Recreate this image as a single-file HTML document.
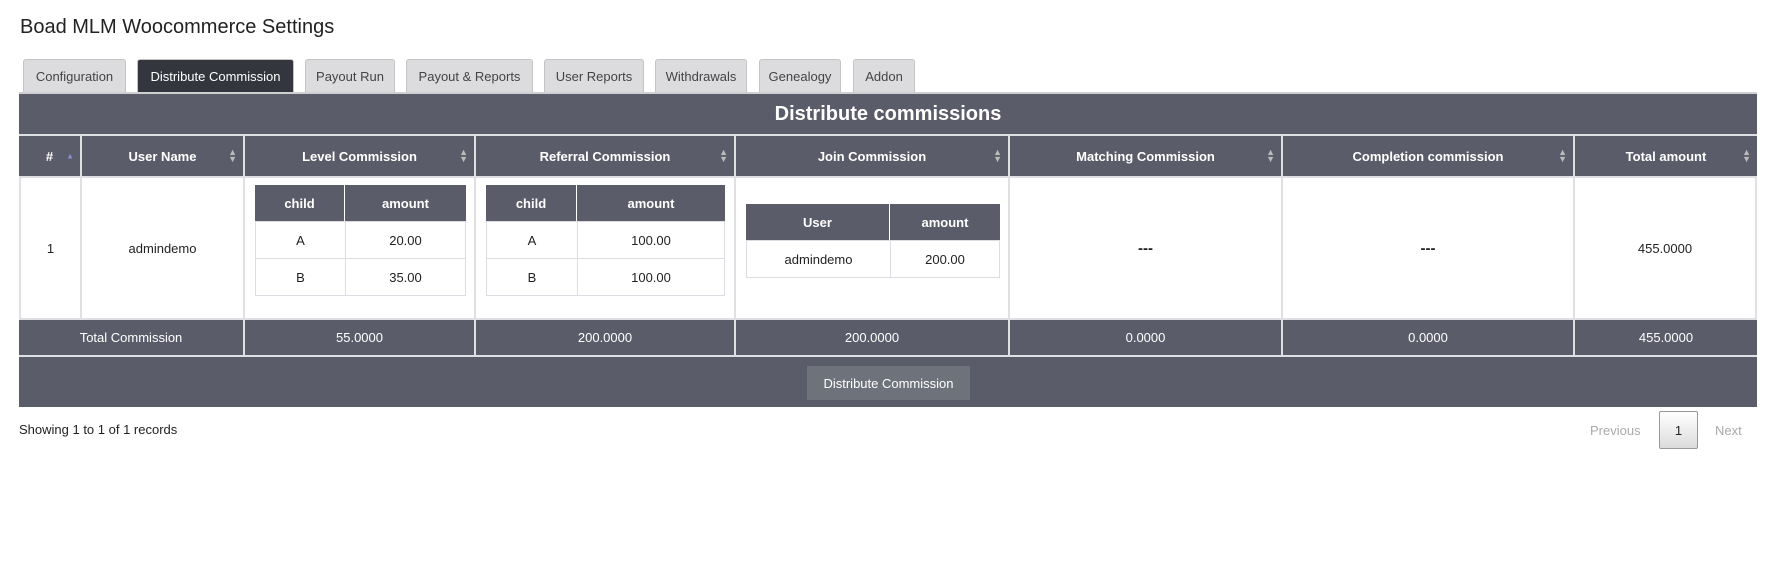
<!DOCTYPE html>
<html><head><meta charset="utf-8"><style>
*{box-sizing:border-box;margin:0;padding:0}
body{width:1778px;height:563px;background:#fff;font-family:"Liberation Sans",sans-serif;color:#222;position:relative;overflow:hidden;font-size:13px}
.a{position:absolute}
.c{display:flex;align-items:center;justify-content:center;text-align:center}
.tab{position:absolute;top:59px;height:33px;background:#dcdcde;border:1px solid #c4c4c4;border-bottom:none;border-radius:3px 3px 0 0;color:#444;font-size:13px}
.d{background:#5b5c69;color:#fff}
.h{font-weight:bold;font-size:13px}
.s{position:absolute;right:6px;top:50%;transform:translateY(-50%);font-size:9px;line-height:7px;color:#bbb;text-align:center}
.w{background:#fff;border:1px solid #dcdde2}
</style></head><body>
<div class="a" style="left:20px;top:16px;font-size:20px;color:#222">Boad MLM Woocommerce Settings</div>
<div class="tab c" style="left:23px;width:103px">Configuration</div>
<div class="tab c" style="left:137px;width:157px;background:#33363d;color:#fff">Distribute Commission</div>
<div class="tab c" style="left:305px;width:90px">Payout Run</div>
<div class="tab c" style="left:406px;width:127px">Payout &amp; Reports</div>
<div class="tab c" style="left:544px;width:100px">User Reports</div>
<div class="tab c" style="left:655px;width:92px">Withdrawals</div>
<div class="tab c" style="left:759px;width:82px">Genealogy</div>
<div class="tab c" style="left:853px;width:62px">Addon</div>
<div class="a" style="left:19px;top:92px;width:1738px;height:2px;background:#d0d0d0"></div>
<div class="a" style="left:19px;top:94px;width:1738px;height:313px;background:#dfe0e4"></div>
<div class="a d c" style="left:19px;top:94px;width:1738px;height:40px;font-size:20px;font-weight:bold">Distribute commissions</div>
<div class="a d c h" style="left:19px;top:136px;width:61px;height:40px">#<span class="s" style="color:#8a8ad6;font-size:8px">▲</span></div>
<div class="a d c h" style="left:82px;top:136px;width:161px;height:40px">User Name<span class="s">▲<br>▼</span></div>
<div class="a d c h" style="left:245px;top:136px;width:229px;height:40px">Level Commission<span class="s">▲<br>▼</span></div>
<div class="a d c h" style="left:476px;top:136px;width:258px;height:40px">Referral Commission<span class="s">▲<br>▼</span></div>
<div class="a d c h" style="left:736px;top:136px;width:272px;height:40px">Join Commission<span class="s">▲<br>▼</span></div>
<div class="a d c h" style="left:1010px;top:136px;width:271px;height:40px">Matching Commission<span class="s">▲<br>▼</span></div>
<div class="a d c h" style="left:1283px;top:136px;width:290px;height:40px">Completion commission<span class="s">▲<br>▼</span></div>
<div class="a d c h" style="left:1575px;top:136px;width:182px;height:40px">Total amount<span class="s">▲<br>▼</span></div>
<div class="a c" style="left:21px;top:178px;width:59px;height:140px;background:#fff">1</div>
<div class="a c" style="left:82px;top:178px;width:161px;height:140px;background:#fff">admindemo</div>
<div class="a" style="left:245px;top:178px;width:229px;height:140px;background:#fff"></div>
<div class="a" style="left:476px;top:178px;width:258px;height:140px;background:#fff"></div>
<div class="a" style="left:736px;top:178px;width:272px;height:140px;background:#fff"></div>
<div class="a c" style="left:1010px;top:178px;width:271px;height:140px;background:#fff;font-weight:bold;font-size:15px">---</div>
<div class="a c" style="left:1283px;top:178px;width:290px;height:140px;background:#fff;font-weight:bold;font-size:15px">---</div>
<div class="a c" style="left:1575px;top:178px;width:180px;height:140px;background:#fff">455.0000</div>
<div class="a d c h" style="left:255px;top:185px;width:89px;height:36px">child</div>
<div class="a d c h" style="left:345px;top:185px;width:121px;height:36px">amount</div>
<div class="a w c" style="left:255px;top:221px;width:91px;height:38px">A</div>
<div class="a w c" style="left:345px;top:221px;width:121px;height:38px">20.00</div>
<div class="a w c" style="left:255px;top:258px;width:91px;height:38px">B</div>
<div class="a w c" style="left:345px;top:258px;width:121px;height:38px">35.00</div>
<div class="a d c h" style="left:486px;top:185px;width:90px;height:36px">child</div>
<div class="a d c h" style="left:577px;top:185px;width:148px;height:36px">amount</div>
<div class="a w c" style="left:486px;top:221px;width:92px;height:38px">A</div>
<div class="a w c" style="left:577px;top:221px;width:148px;height:38px">100.00</div>
<div class="a w c" style="left:486px;top:258px;width:92px;height:38px">B</div>
<div class="a w c" style="left:577px;top:258px;width:148px;height:38px">100.00</div>
<div class="a d c h" style="left:746px;top:204px;width:143px;height:36px">User</div>
<div class="a d c h" style="left:890px;top:204px;width:110px;height:36px">amount</div>
<div class="a w c" style="left:746px;top:240px;width:145px;height:38px">admindemo</div>
<div class="a w c" style="left:890px;top:240px;width:110px;height:38px">200.00</div>
<div class="a d c" style="left:19px;top:320px;width:224px;height:35px">Total Commission</div>
<div class="a d c" style="left:245px;top:320px;width:229px;height:35px">55.0000</div>
<div class="a d c" style="left:476px;top:320px;width:258px;height:35px">200.0000</div>
<div class="a d c" style="left:736px;top:320px;width:272px;height:35px">200.0000</div>
<div class="a d c" style="left:1010px;top:320px;width:271px;height:35px">0.0000</div>
<div class="a d c" style="left:1283px;top:320px;width:290px;height:35px">0.0000</div>
<div class="a d c" style="left:1575px;top:320px;width:182px;height:35px">455.0000</div>
<div class="a d" style="left:19px;top:357px;width:1738px;height:50px"></div>
<div class="a c" style="left:807px;top:366px;width:163px;height:34px;background:#6e727b;color:#fff">Distribute Commission</div>
<div class="a" style="left:19px;top:422px">Showing 1 to 1 of 1 records</div>
<div class="a" style="left:1590px;top:423px;color:#aaa">Previous</div>
<div class="a c" style="left:1659px;top:411px;width:39px;height:38px;border:1px solid #999;border-radius:2px;background:linear-gradient(#fff,#dcdcdc)">1</div>
<div class="a" style="left:1715px;top:423px;color:#aaa">Next</div>
</body></html>
